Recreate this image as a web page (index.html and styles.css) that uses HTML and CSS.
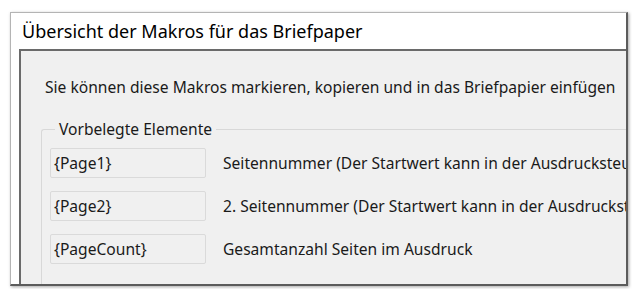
FILE: index.html
```html
<!DOCTYPE html>
<html lang="de">
<head>
  <meta charset="UTF-8">
  <title>Übersicht der Makros</title>
  <link rel="stylesheet" href="styles.css">
</head>
<body>
  <div class="window">
    <div class="window__title">Übersicht der Makros für das Briefpaper</div>
    <div class="window__client">
      <p class="intro">Sie können diese Makros markieren, kopieren und in das Briefpapier einfügen</p>
      <fieldset class="group">
        <legend class="group__label">Vorbelegte Elemente</legend>
        <div class="macro">
          <div class="macro__field">{Page1}</div>
          <div class="macro__desc">Seitennummer (Der Startwert kann in der Ausdrucksteuerung festgelegt werden)</div>
        </div>
        <div class="macro">
          <div class="macro__field">{Page2}</div>
          <div class="macro__desc">2. Seitennummer (Der Startwert kann in der Ausdrucksteuerung festgelegt werden)</div>
        </div>
        <div class="macro">
          <div class="macro__field">{PageCount}</div>
          <div class="macro__desc">Gesamtanzahl Seiten im Ausdruck</div>
        </div>
      </fieldset>
    </div>
  </div>
</body>
</html>
```

FILE: styles.css
```css
*{
  box-sizing: border-box;
}

body{
  margin: 0;
  width: 632px;
  height: 289px;
  overflow: hidden;
  background: #fff;
  font-family: "Noto Sans", "Open Sans", sans-serif;
  color: #1a1a1a;
}

.window{
  margin: 12px 0 0 10px;
  width: 618px;
  height: 274px;
  border-top: 1px solid #b4b4b4;
  border-left: 1px solid #b4b4b4;
  border-right: 2px solid #5c5c5c;
  border-bottom: 2px solid #5c5c5c;
  box-shadow: 1px 1px 3px rgba(0,0,0,.35);
  display: flex;
  flex-direction: column;
  overflow: hidden;
}

.window__title{
  height: 36px;
  flex: none;
  background: #fff;
  padding-left: 11px;
  line-height: 37px;
  font-size: 18px;
  color: #000;
  white-space: nowrap;
}

.window__client{
  flex: 1;
  margin-left: 8px;
  border-top: 2px solid #6a6a6a;
  border-left: 2px solid #6a6a6a;
  background: #f0f0f0;
  padding: 26px 0 0 24px;
  overflow: hidden;
}

.intro{
  margin: 0;
  font-size: 15.6px;
  line-height: 20px;
  white-space: nowrap;
}

.group{
  margin: 23px 0 0 -4px;
  padding: 10px 0 0 8px;
  border: 1px solid #d8d8d8;
  border-right: none;
  border-radius: 3px 0 0 3px;
  width: 620px;
  height: 200px;
}

.group__label{
  margin-left: 5px;
  padding: 0 4px;
  font-size: 15.6px;
  line-height: 18px;
  white-space: nowrap;
}

.macro{
  display: flex;
  align-items: center;
  gap: 17px;
  margin-bottom: 13px;
  white-space: nowrap;
}

.macro__field{
  width: 156px;
  height: 30px;
  flex: none;
  border: 1px solid #dadada;
  border-radius: 2px;
  padding-left: 3px;
  font-size: 15.6px;
  line-height: 28px;
}

.macro__desc{
  font-size: 15.6px;
}
```
